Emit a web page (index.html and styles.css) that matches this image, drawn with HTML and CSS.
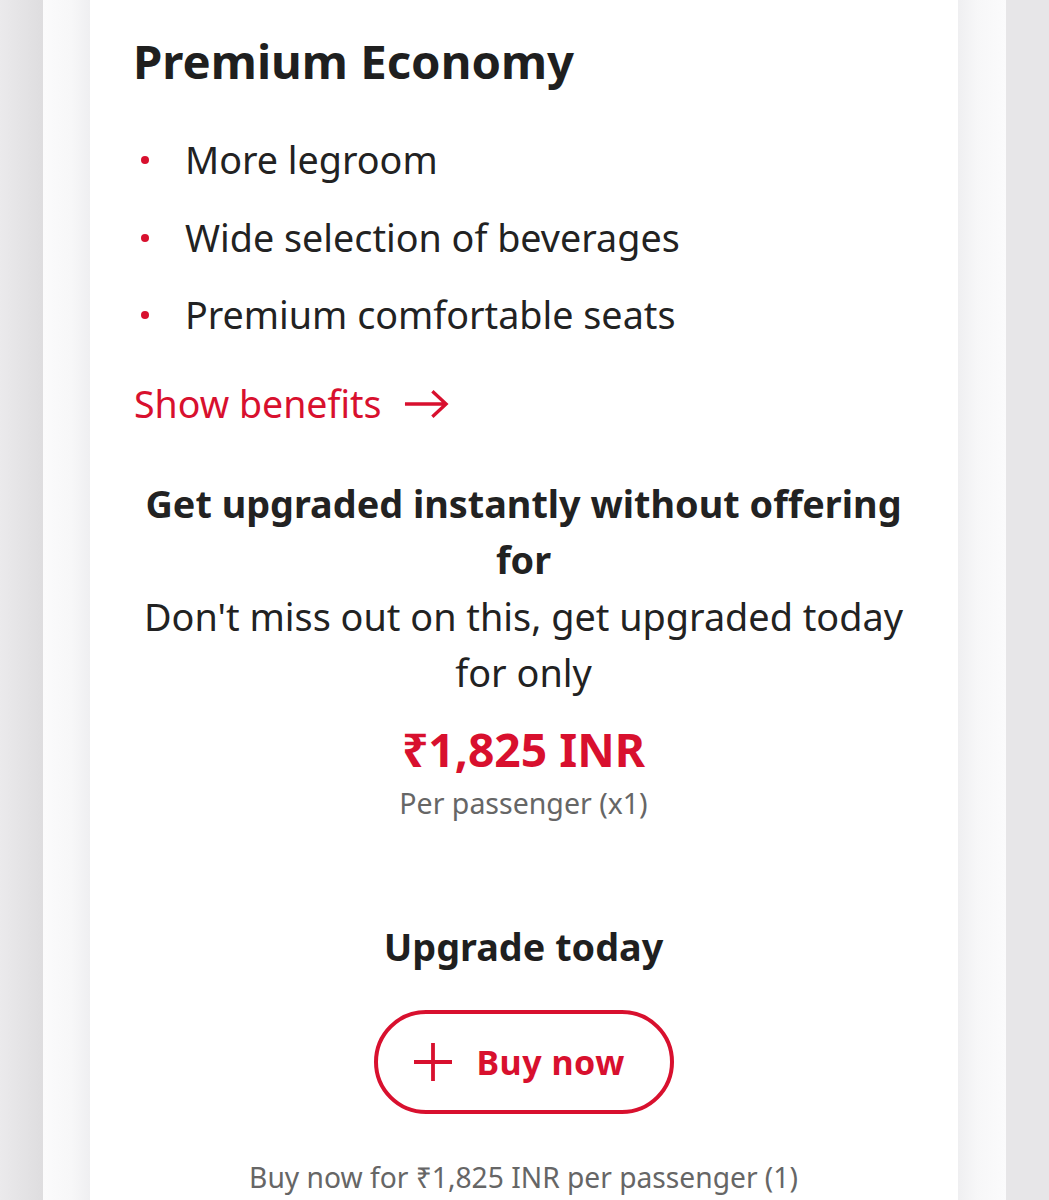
FILE: index.html
```html
<!DOCTYPE html>
<html lang="en">
<head>
<meta charset="utf-8">
<title>Premium Economy upgrade</title>
<link rel="stylesheet" href="styles.css">
</head>
<body>
<div class="page">
  <div class="edge edge-left"></div>
  <div class="shade shade-left"></div>
  <main class="card">
    <h1 class="title">Premium Economy</h1>
    <ul class="features">
      <li>More legroom</li>
      <li>Wide selection of beverages</li>
      <li>Premium comfortable seats</li>
    </ul>
    <a class="benefits" href="#">Show benefits
      <svg class="arrow" viewBox="0 0 48 32" width="48" height="32" aria-hidden="true">
        <path d="M2 16 H44 M30 3 L44 16 L30 29" fill="none" stroke="currentColor" stroke-width="3.4" stroke-linecap="butt" stroke-linejoin="miter"/>
      </svg>
    </a>
    <section class="offer">
      <h2 class="offer-title">Get upgraded instantly without offering for</h2>
      <p class="offer-text">Don't miss out on this, get upgraded today for only</p>
      <p class="price">₹1,825 INR</p>
      <p class="per">Per passenger (x1)</p>
    </section>
    <section class="cta">
      <h3 class="cta-title">Upgrade today</h3>
      <button class="buy" type="button">
        <svg class="plus" viewBox="0 0 40 40" width="40" height="40" aria-hidden="true">
          <path d="M20 1 V39 M1 20 H39" fill="none" stroke="currentColor" stroke-width="3.8"/>
        </svg>
        <span>Buy now</span>
      </button>
      <p class="note">Buy now for ₹1,825 INR per passenger (1)</p>
    </section>
  </main>
  <div class="shade shade-right"></div>
  <div class="edge edge-right"></div>
</div>
</body>
</html>
```

FILE: styles.css
```css
html, body {
  margin: 0;
  padding: 0;
  height: 100%;
}
body {
  font-family: "Noto Sans", "Open Sans", "DejaVu Sans", sans-serif;
  color: #222222;
  background: #ffffff;
}
.page {
  display: flex;
  min-height: 1200px;
}
.edge {
  flex: 0 0 43px;
}
.edge-left {
  background: linear-gradient(to right, #ebeaec, #dedddf);
}
.edge-right {
  background: #e7e6e8;
}
.shade {
  flex: 0 0 47px;
}
.shade-left {
  background: linear-gradient(to right, #fbfbfc 0%, #f7f7f8 60%, #efeff1 100%);
}
.shade-right {
  flex-basis: 48px;
  background: linear-gradient(to right, #efeff1 0%, #f7f7f8 40%, #fbfbfc 100%);
}
.card {
  flex: 0 0 868px;
  background: #ffffff;
  box-sizing: border-box;
  padding: 33px 44px 0 43px;
}
.title {
  margin: 0;
  font-size: 47.3px;
  line-height: 55px;
  font-weight: 700;
  color: #1f1f1f;
}
.features {
  list-style: none;
  margin: 33px 0 0 0;
  padding: 0;
}
.features li {
  position: relative;
  padding-left: 52px;
  font-size: 37.7px;
  line-height: 77.5px;
  color: #222222;
}
.features li::before {
  content: "";
  position: absolute;
  left: 8px;
  top: 35px;
  width: 8px;
  height: 8px;
  border-radius: 50%;
  background: #d8102e;
}
.benefits {
  display: inline-flex;
  align-items: center;
  gap: 21px;
  margin-top: 22px;
  margin-left: 1px;
  font-size: 37.5px;
  line-height: 56px;
  color: #d8102e;
  text-decoration: none;
}
.arrow {
  width: 47px;
  height: 32px;
}
.offer {
  text-align: center;
  margin-top: 44px;
}
.offer-title {
  margin: 0;
  font-size: 37.8px;
  line-height: 56.5px;
  font-weight: 700;
  color: #222222;
}
.offer-text {
  margin: 0;
  font-size: 37.8px;
  line-height: 56.5px;
  color: #222222;
}
.price {
  margin: 17px 0 0 0;
  font-size: 46.2px;
  line-height: 62px;
  font-weight: 700;
  color: #d8102e;
}
.per {
  margin: 0;
  font-size: 28.5px;
  line-height: 44px;
  color: #666666;
}
.cta {
  text-align: center;
  margin-top: 94px;
}
.cta-title {
  margin: 0;
  font-size: 37.8px;
  line-height: 56px;
  font-weight: 700;
  color: #1f1f1f;
}
.buy {
  display: inline-flex;
  align-items: center;
  gap: 24px;
  margin-top: 35px;
  width: 300px;
  height: 104px;
  box-sizing: border-box;
  padding: 0 0 0 35px;
  border: 4.5px solid #d8102e;
  border-radius: 52px;
  background: #ffffff;
  color: #d8102e;
  font-family: inherit;
  font-size: 34px;
  font-weight: 700;
  letter-spacing: 0.5px;
}
.plus {
  width: 40px;
  height: 40px;
}
.note {
  margin: 43px 0 0 0;
  font-size: 28.2px;
  line-height: 40px;
  color: #666666;
}
```
